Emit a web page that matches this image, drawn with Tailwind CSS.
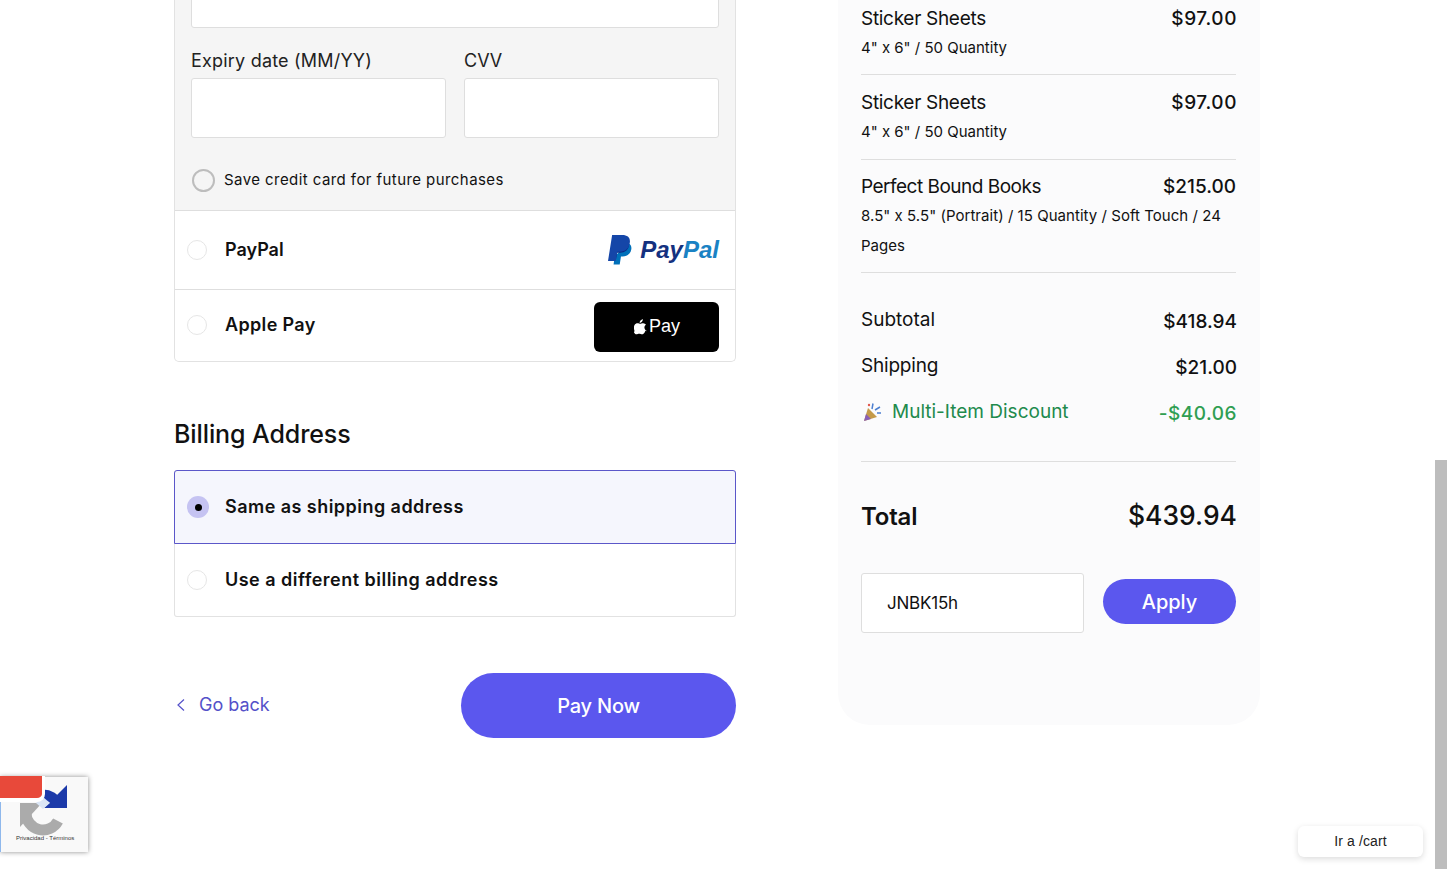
<!DOCTYPE html>
<html lang="en">
<head>
<meta charset="utf-8">
<title>Checkout</title>
<script src="https://cdn.jsdelivr.net/npm/@tailwindcss/browser@4"></script>
</head>
<body class="bg-white">
<div class="relative w-[1447px] h-[869px] overflow-hidden bg-white text-black font-['Inter','Noto_Sans',sans-serif]">
  <div class="flex items-start pl-[174px] -mt-[40px]">
    <!-- Left column -->
    <div class="w-[562px] shrink-0">
      <div class="border-x border-b border-[#e2e2e2] rounded-b-[5px]">
        <div class="bg-[#f5f5f5] px-4 pb-[12px] border-b border-[#dedede]">
          <div class="h-[68px] bg-white border border-[#dedede] rounded-[3px]"></div>
          <div class="flex gap-[18px] mt-[20px]">
            <div class="flex-1">
              <div class="text-[18px] leading-[26px] tracking-[0.2px] text-[#222]">Expiry date (MM/YY)</div>
              <div class="h-[60px] mt-[4px] bg-white border border-[#dedede] rounded-[3px]"></div>
            </div>
            <div class="flex-1">
              <div class="text-[18px] leading-[26px] text-[#222]">CVV</div>
              <div class="h-[60px] mt-[4px] bg-white border border-[#dedede] rounded-[3px]"></div>
            </div>
          </div>
          <div class="flex items-center gap-[9px] mt-[29px] pl-[1px] h-[26px]">
            <span class="w-[23px] h-[23px] rounded-full border-2 border-[#bdbdbd] bg-[#f5f5f5]"></span>
            <span class="text-[15px] tracking-[0.43px] text-[#111]">Save credit card for future purchases</span>
          </div>
          <div class="h-[5px]"></div>
        </div>
        <div class="flex items-center justify-between h-[79px] pl-3 pr-4 border-b border-[#dedede]">
          <div class="flex items-center gap-[18px]">
            <span class="w-5 h-5 rounded-full border border-[#e6e6e6]"></span>
            <span class="-mt-[2px] text-[18px] font-semibold text-[#111]">PayPal</span>
          </div>
          <div class="flex items-center gap-[8px]">
            <svg width="24" height="30" viewBox="0 0 25 31" aria-hidden="true">
              <path fill="#0070ba" d="M21.500 8.500c2.200 1.300 3.200 3.400 2.800 6.200-.8 4.800-4.200 7.500-9 7.500h-1.800l-1.300 8.300H5.800L7 22z"/>
              <path fill="#0b2a86" d="M7.800 9h9.700c2 0 3.500.4 4.500 1-.7 5.300-4.200 8.300-9.500 8.300H9.600L8 27z"/>
              <path fill="#1546a8" d="M4.300 0h10.500c5.800 0 8.800 3 7.900 8-.9 6.200-5 9.300-10.500 9.300H9.700L8 27H0z"/>
            </svg>
            <span class="text-[24px] leading-none font-bold italic tracking-[0px] font-['Liberation_Sans',sans-serif]"><span class="text-[#14317f]">Pay</span><span class="text-[#1a82c4]">Pal</span></span>
          </div>
        </div>
        <div class="flex items-center justify-between h-[71px] pl-3 pr-4">
          <div class="flex items-center gap-[18px]">
            <span class="-mt-px w-5 h-5 rounded-full border border-[#e6e6e6]"></span>
            <span class="-mt-[2px] text-[18px] font-semibold tracking-[0.35px] text-[#111]">Apple Pay</span>
          </div>
          <div class="flex items-center justify-center gap-[2px] w-[125px] h-[50px] mt-[2px] pl-[1px] bg-black rounded-[6px] text-white text-[18px] font-['Liberation_Sans',sans-serif]">
            <svg width="13" height="16" viewBox="0 0 170 200" aria-hidden="true">
              <path fill="#fff" d="M150 150c-3 8-7 15-11 21-6 8-11 14-15 17-6 5-12 8-19 8-5 0-11-1-18-4s-13-4-19-4-13 1-19 4c-7 3-12 4-17 4-7 0-13-3-20-9-4-4-9-10-15-18C10 160 6 150 3 139c-3-12-4-23-4-33 0-13 3-24 8-33 4-7 10-13 17-17s14-6 23-6c5 0 11 1 19 4s13 4 15 4c2 0 8-2 17-5 9-2 16-3 22-3 16 1 29 8 37 20-14 9-21 21-21 37 0 12 5 23 13 31 4 4 9 7 14 9-1 3-2 6-3 8zM115 4c0 10-4 19-11 27-8 10-19 16-30 15V42c0-9 4-19 11-27 4-4 8-8 14-11 6-3 11-4 16-4z"/>
            </svg>
            <span>Pay</span>
          </div>
        </div>
      </div>

      <h2 class="mt-[54px] pb-[1px] text-[25px] leading-[36px] font-medium tracking-[-0.1px] text-[#111]">Billing Address</h2>

      <div class="mt-[17px] rounded-[3px] border-x border-b border-[#e2e2e2]">
        <div class="-mx-px flex items-center gap-[17px] h-[74px] pl-3 border border-[#5b57c9] rounded-t-[3px] bg-[#f5f6fd]">
          <span class="flex items-center justify-center w-[22px] h-[22px] rounded-full bg-[#c5c3f2]"><span class="w-[7px] h-[7px] rounded-full bg-black"></span></span>
          <span class="-mt-[2px] -ml-px text-[18px] font-semibold tracking-[0.46px] text-[#111]">Same as shipping address</span>
        </div>
        <div class="flex items-center gap-[18px] h-[72px] pl-3">
          <span class="w-5 h-5 rounded-full border border-[#e6e6e6]"></span>
          <span class="-mt-[2px] text-[18px] font-semibold tracking-[0.48px] text-[#111]">Use a different billing address</span>
        </div>
      </div>

      <div class="flex items-center justify-between mt-[56px]">
        <a class="flex items-center gap-[13px] pb-[2px] text-[18px] text-[#5451c9]">
          <svg width="12" height="14" viewBox="0 0 12 14" fill="none" aria-hidden="true"><path d="M10 1.500 4 7l6 5.500" stroke="#5451c9" stroke-width="1.200"/></svg>
          <span>Go back</span>
        </a>
        <button class="w-[275px] h-[65px] rounded-full bg-[#5b57ee] text-white text-[20px] font-medium tracking-[-0.2px]">Pay Now</button>
      </div>
    </div>

    <!-- Right panel -->
    <div class="w-[422px] h-[765px] shrink-0 ml-[102px] bg-[#fbfbfc] rounded-b-[32px] pl-[23px] pr-[24px]">
      <div class="h-[115px] border-b border-[#dedede] flex flex-col justify-end pb-[12px]">
        <div class="flex justify-between text-[19px] leading-[30px] text-[#111]"><span class="tracking-[-0.3px]">Sticker Sheets</span><span class="-mr-px font-medium tracking-[0.6px]">$97.00</span></div>
        <div class="text-[15px] leading-[28px] text-[#111]">4" x 6" / 50 Quantity</div>
      </div>
      <div class="h-[85px] border-b border-[#dedede] flex flex-col justify-end pb-[13px]">
        <div class="flex justify-between text-[19px] leading-[30px] text-[#111]"><span class="tracking-[-0.3px]">Sticker Sheets</span><span class="-mr-px font-medium tracking-[0.6px]">$97.00</span></div>
        <div class="text-[15px] leading-[28px] text-[#111]">4" x 6" / 50 Quantity</div>
      </div>
      <div class="h-[113px] border-b border-[#dedede] pt-[12px]">
        <div class="flex justify-between text-[19px] leading-[30px] text-[#111]"><span class="tracking-[-0.5px]">Perfect Bound Books</span><span class="font-medium">$215.00</span></div>
        <div class="-mt-px text-[15px] leading-[30px] tracking-[0.04px] text-[#111]">8.5" x 5.5" (Portrait) / 15 Quantity / Soft Touch / 24 Pages</div>
      </div>
      <div class="pt-[32px] h-[189px] border-b border-[#dedede]">
        <div class="flex justify-between items-center h-[30px] text-[19px] text-[#111]"><span>Subtotal</span><span class="-mr-px font-medium pt-[4px]">$418.94</span></div>
        <div class="flex justify-between items-center h-[30px] mt-[16px] text-[19px] text-[#111]"><span class="tracking-[-0.2px]">Shipping</span><span class="-mr-px font-medium pt-[4px]">$21.00</span></div>
        <div class="flex justify-between items-center h-[30px] mt-[16px] text-[19px] text-[#218a4c]">
          <span class="flex items-center gap-[9px]">
            <svg width="22" height="20" viewBox="0 0 22 20" aria-hidden="true">
              <path fill="#c49a4a" d="M3 19 7 6l9 9z"/>
              <path fill="#8a5fb5" d="M3 19l2-7 5 5z"/>
              <circle cx="8" cy="3" r="1.200" fill="#e2574c"/>
              <path d="M12 1.500 11 7M19 5l-5 3M20 11h-4" stroke="#4c7fd0" stroke-width="1.500" fill="none"/>
            </svg>
            <span>Multi-Item Discount</span>
          </span>
          <span class="-mr-px font-medium pt-[4px] tracking-[0.5px] text-[#2f9e52]">-$40.06</span>
        </div>
      </div>
      <div class="flex justify-between items-center h-[110px] text-[#111]">
        <span class="text-[24px] font-semibold -mt-px tracking-[-0.2px]">Total</span>
        <span class="-mr-px text-[26.5px] font-medium -mt-[2px]">$439.94</span>
      </div>
      <div class="flex items-center justify-between mt-[1px]">
        <div class="flex items-center w-[223px] h-[60px] pl-[25px] pt-[1px] bg-white border border-[#dedede] rounded-[3px] text-[17px] tracking-[-0.2px] text-[#111]">JNBK15h</div>
        <button class="w-[133px] h-[45px] -mt-[3px] rounded-full bg-[#5b57ee] text-white text-[20px] font-medium">Apply</button>
      </div>
    </div>
  </div>

  <!-- Scrollbar thumb -->
  <div class="absolute right-0 top-[460px] bottom-0 w-3 bg-[#bdbdbd]"></div>

  <!-- reCAPTCHA badge -->
  <div class="absolute left-0 top-[777px] w-[88px] h-[75px] bg-[#f9f9f9] shadow-[0_0_5px_rgba(0,0,0,0.45)] overflow-hidden">
    <div class="absolute left-0 top-0 bottom-0 w-px bg-[#8fb8ec]"></div>
    <svg class="absolute left-0 top-0" width="88" height="60" viewBox="0 0 88 60" aria-hidden="true">
      <path d="M43 18A17 17 0 0 1 58 27" fill="none" stroke="#1c3aa9" stroke-width="11"/>
      <path fill="#1c3aa9" d="M67 8V31H44z"/>
      <path d="M58 44A17 17 0 0 1 26 36" fill="none" stroke="#ababab" stroke-width="11"/>
      <path fill="#ababab" d="M20 26H42L20 50z"/>
      <path fill="#dbe6f5" d="M36 26l7-6 7 6-7 6z"/>
    </svg>
    <div class="absolute left-[16px] top-[57px] text-[6px] leading-[9px] font-medium text-[#333] whitespace-nowrap font-['Liberation_Sans',sans-serif]">Privacidad - Términos</div>
  </div>
  <div class="absolute left-0 top-[776px] w-[45px] h-[26px] rounded-br-[8px] bg-[#e8493a] border-r-[3px] border-b-[4px] border-white"></div>

  <!-- Tooltip -->
  <div class="absolute left-[1298px] top-[826px] flex items-center justify-center w-[125px] h-[31px] rounded-[6px] bg-white shadow-[0_2px_6px_rgba(0,0,0,0.14)] text-[14px] tracking-[0.1px] text-[#222] font-['Liberation_Sans',sans-serif]">Ir a /cart</div>
</div>
</body>
</html>
